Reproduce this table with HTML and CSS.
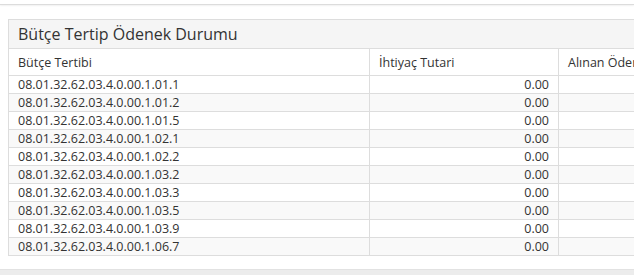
FILE: index.html
```html
<!DOCTYPE html>
<html lang="tr">
<head>
<meta charset="utf-8">
<title>Bütçe Tertip Ödenek Durumu</title>
<link rel="stylesheet" href="styles.css">
</head>
<body>
<div class="topbar"></div>
<main class="content">
  <section class="panel">
    <div class="panel-heading">Bütçe Tertip Ödenek Durumu</div>
    <table class="grid">
      <thead>
        <tr><th class="c1">Bütçe Tertibi</th><th class="c2">İhtiyaç Tutari</th><th class="c3">Alınan Ödenek</th></tr>
      </thead>
      <tbody>
        <tr><td>08.01.32.62.03.4.0.00.1.01.1</td><td class="num">0.00</td><td></td></tr>
        <tr><td>08.01.32.62.03.4.0.00.1.01.2</td><td class="num">0.00</td><td></td></tr>
        <tr><td>08.01.32.62.03.4.0.00.1.01.5</td><td class="num">0.00</td><td></td></tr>
        <tr><td>08.01.32.62.03.4.0.00.1.02.1</td><td class="num">0.00</td><td></td></tr>
        <tr><td>08.01.32.62.03.4.0.00.1.02.2</td><td class="num">0.00</td><td></td></tr>
        <tr><td>08.01.32.62.03.4.0.00.1.03.2</td><td class="num">0.00</td><td></td></tr>
        <tr><td>08.01.32.62.03.4.0.00.1.03.3</td><td class="num">0.00</td><td></td></tr>
        <tr><td>08.01.32.62.03.4.0.00.1.03.5</td><td class="num">0.00</td><td></td></tr>
        <tr><td>08.01.32.62.03.4.0.00.1.03.9</td><td class="num">0.00</td><td></td></tr>
        <tr><td>08.01.32.62.03.4.0.00.1.06.7</td><td class="num">0.00</td><td></td></tr>
      </tbody>
    </table>
  </section>
</main>
<div class="footer"></div>
</body>
</html>
```
FILE: styles.css
```css
html, body {
  margin: 0;
  padding: 0;
  background: #fff;
  overflow: hidden;
}
body {
  font-family: "Open Sans", "Liberation Sans", sans-serif;
  color: #333;
  width: 634px;
  height: 275px;
  display: flex;
  flex-direction: column;
}
.topbar {
  height: 4px;
  border-bottom: 1px solid #dcdcdc;
  box-shadow: 0 1px 2px rgba(0,0,0,0.06);
  flex: none;
}
.content {
  padding: 14px 0 0 8px;
  flex: 1;
}
.panel {
  width: 800px;
  border: 1px solid #ddd;
  border-bottom: none;
  background: #fff;
}
.panel-heading {
  background: #f5f5f5;
  border-bottom: 1px solid #ddd;
  height: 28px;
  line-height: 28px;
  padding: 0 9px;
  font-size: 16px;
  color: #333;
}
.grid {
  border-collapse: collapse;
  width: 100%;
  font-size: 12.5px;
  table-layout: fixed;
}
.grid th {
  text-align: left;
  font-weight: normal;
  height: 26px;
  padding: 0 9px;
  border-bottom: 1px solid #ddd;
  border-left: 1px solid #ddd;
  background: #fff;
  white-space: nowrap;
}
.grid th:first-child, .grid td:first-child { border-left: none; }
.grid .c1 { width: 342px; }
.grid .c2 { width: 170px; }
.grid td {
  height: 17px;
  line-height: 17px;
  padding: 0 9px;
  border-bottom: 1px solid #ddd;
  border-left: 1px solid #ddd;
  white-space: nowrap;
}
.grid tbody tr:nth-child(even) td { background: #f9f9f9; }
.grid .num { text-align: right; }
.footer {
  height: 5px;
  background: #ececec;
  border-top: 1px solid #e2e2e2;
  flex: none;
}
```
